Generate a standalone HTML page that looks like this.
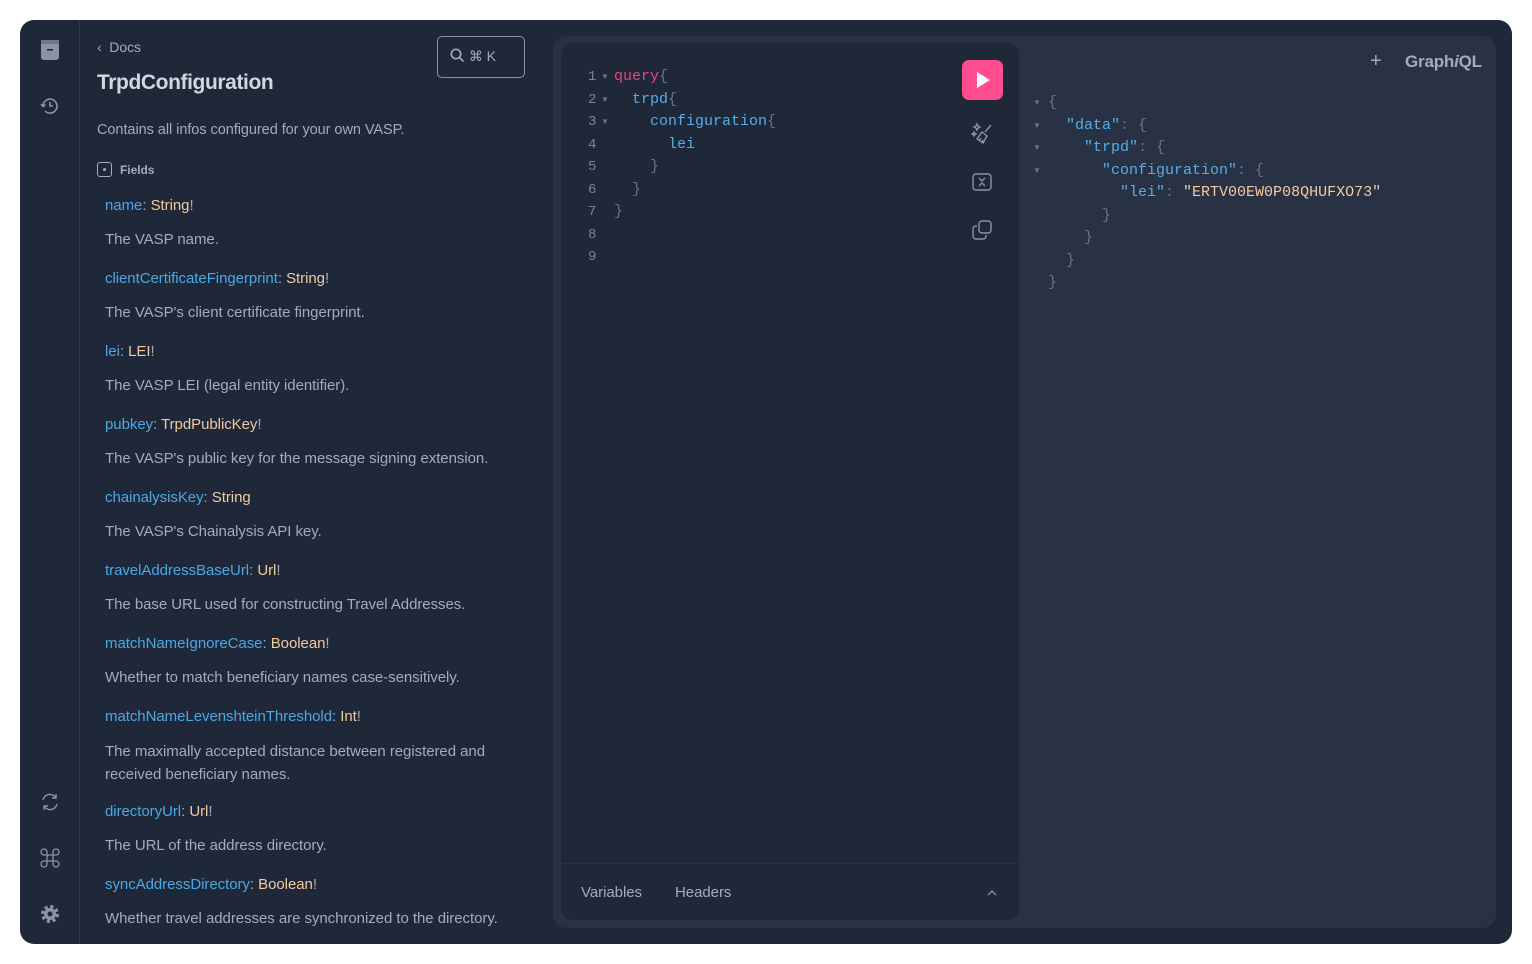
<!DOCTYPE html>
<html><head><meta charset="utf-8"><style>
*{margin:0;padding:0;box-sizing:border-box}
body{width:1532px;height:964px;background:#fff;font-family:"Liberation Sans",sans-serif;position:relative;overflow:hidden}
.app{position:absolute;left:20px;top:20px;width:1492px;height:924px;background:#1f2839;border-radius:14px;overflow:hidden}
.side{position:absolute;left:0;top:0;width:60px;height:924px;border-right:1px solid #2e384b}
.ico{position:absolute;left:19px;width:22px;height:22px}
.docs{position:absolute;left:77px;top:0;width:450px;color:#9aa3b3}
.a{position:absolute;font-size:15px;white-space:nowrap;letter-spacing:-0.05px}
.f{color:#4aa8e6}.t{color:#f3c9a0}
.d{color:#a4acb9}
.sess{position:absolute;left:533px;top:16px;width:943px;height:892px;background:#283244;border-radius:14px}
.ed{position:absolute;left:8px;top:7px;width:458px;height:877px;background:#1f2839;border-radius:12px}
.mono{font-family:"Liberation Mono","DejaVu Sans Mono",monospace;font-size:15px;position:absolute;white-space:pre;line-height:22.5px}
.ln{color:#7b8496}.g{color:#6b7486}.k{color:#e0487f}.b{color:#55aee8}.s{color:#f3c9a0}
.ar{position:absolute;color:#6b7486;font-size:8px;line-height:22.5px;white-space:pre}
</style></head><body>
<div class="app">
 <div class="side">
  <svg class="ico" style="top:19px" viewBox="0 0 22 22"><rect x="2" y="1" width="18" height="20" rx="3" fill="#8b93a3"/><rect x="2" y="1" width="18" height="4" fill="#6f7788"/><rect x="8" y="10" width="6" height="1.6" fill="#1f2839"/></svg>
  <svg class="ico" style="top:75px" viewBox="0 0 22 22" fill="none" stroke="#8b93a3" stroke-width="1.6"><path d="M4 11a7 7 0 1 1 2 5"/><path d="M2 9l2 2.5 2.5-2"/><path d="M11 7v4h3"/></svg>
  <svg class="ico" style="top:771px" viewBox="0 0 22 22" fill="none" stroke="#8b93a3" stroke-width="1.4"><path d="M4 9a7 7 0 0 1 13-2M18 13a7 7 0 0 1-13 2"/><path d="M17 3v4h-4M5 19v-4h4"/></svg>
  <svg class="ico" style="top:827px" viewBox="0 0 22 22" fill="none" stroke="#8b93a3" stroke-width="1.3"><path d="M8 8V5a3 3 0 1 0-3 3h12a3 3 0 1 0-3-3v12a3 3 0 1 0 3-3H5a3 3 0 1 0 3 3z"/></svg>
  <svg class="ico" style="top:883px" viewBox="0 0 22 22"><circle cx="11" cy="11" r="7" fill="none" stroke="#8b93a3" stroke-width="4" stroke-dasharray="3 2.5"/><circle cx="11" cy="11" r="6" fill="#8b93a3"/><circle cx="11" cy="11" r="2.5" fill="#1f2839"/></svg>
 </div>
 <div class="docs">
  <div class="a" style="left:0;top:19px;font-size:14px;color:#a4acb9">‹&nbsp;&nbsp;Docs</div>
  <div class="a" style="left:0;top:51px;font-size:21px;font-weight:bold;color:#d3d8e0;letter-spacing:-0.4px">TrpdConfiguration</div>
  <div class="a" style="left:340px;top:16px;width:88px;height:42px;border:1.5px solid #8b93a3;border-radius:5px;font-size:14px;color:#a4acb9;padding:11px 0 0 12px">
   <svg width="15" height="15" viewBox="0 0 15 15" style="vertical-align:-2px" fill="none" stroke="#a4acb9" stroke-width="1.6"><circle cx="6" cy="6" r="4.7"/><path d="M9.5 9.5l4 4"/></svg> ⌘ K</div>
  <div class="a d" style="left:0;top:102px;font-size:14.5px">Contains all infos configured for your own VASP.</div>
  <div class="a" style="left:0;top:142px;font-size:12px;font-weight:bold;color:#a4acb9"><span style="display:inline-block;width:15px;height:15px;border:1.5px solid #a4acb9;border-radius:3px;vertical-align:-3px;margin-right:8px;position:relative"><span style="position:absolute;left:4.5px;top:4.5px;width:3px;height:3px;background:#a4acb9;border-radius:50%"></span></span>Fields</div>
 </div>
 <div style="position:absolute;left:85px;top:0;width:440px;color:#a4acb9">
  <div class="a" style="top:177px"><span class="f">name</span>: <span class="t">String</span>!</div>
  <div class="a d" style="top:211px">The VASP name.</div>
  <div class="a" style="top:250px"><span class="f">clientCertificateFingerprint</span>: <span class="t">String</span>!</div>
  <div class="a d" style="top:284px">The VASP's client certificate fingerprint.</div>
  <div class="a" style="top:323px"><span class="f">lei</span>: <span class="t">LEI</span>!</div>
  <div class="a d" style="top:357px">The VASP LEI (legal entity identifier).</div>
  <div class="a" style="top:396px"><span class="f">pubkey</span>: <span class="t">TrpdPublicKey</span>!</div>
  <div class="a d" style="top:430px">The VASP's public key for the message signing extension.</div>
  <div class="a" style="top:469px"><span class="f">chainalysisKey</span>: <span class="t">String</span></div>
  <div class="a d" style="top:503px">The VASP's Chainalysis API key.</div>
  <div class="a" style="top:542px"><span class="f">travelAddressBaseUrl</span>: <span class="t">Url</span>!</div>
  <div class="a d" style="top:576px">The base URL used for constructing Travel Addresses.</div>
  <div class="a" style="top:615px"><span class="f">matchNameIgnoreCase</span>: <span class="t">Boolean</span>!</div>
  <div class="a d" style="top:649px">Whether to match beneficiary names case-sensitively.</div>
  <div class="a" style="top:688px"><span class="f">matchNameLevenshteinThreshold</span>: <span class="t">Int</span>!</div>
  <div class="a d" style="top:720px;line-height:23px">The maximally accepted distance between registered and<br>received beneficiary names.</div>
  <div class="a" style="top:783px"><span class="f">directoryUrl</span>: <span class="t">Url</span>!</div>
  <div class="a d" style="top:817px">The URL of the address directory.</div>
  <div class="a" style="top:856px"><span class="f">syncAddressDirectory</span>: <span class="t">Boolean</span>!</div>
  <div class="a d" style="top:890px">Whether travel addresses are synchronized to the directory.</div>
 </div>
 <div class="sess">
  <div class="ed">
   <div class="mono ln" style="left:27px;top:23px;font-size:14px">1
2
3
4
5
6
7
8
9</div>
   <div class="ar" style="left:40px;top:23px">▼
▼
▼</div>
   <div class="mono" style="left:53px;top:23px"><span class="k">query</span><span class="g">{</span>
  <span class="b">trpd</span><span class="g">{</span>
    <span class="b">configuration</span><span class="g">{</span>
      <span class="b">lei</span>
    <span class="g">}</span>
  <span class="g">}</span>
<span class="g">}</span></div>
   <div style="position:absolute;left:401px;top:17px;width:41px;height:40px;background:#ff4c8f;border-radius:7px"><svg width="41" height="40" viewBox="0 0 41 40"><path d="M15 12v16l13-8z" fill="#fff"/></svg></div>
   <svg style="position:absolute;left:410px;top:79px" width="23" height="23" viewBox="0 0 23 23" fill="none" stroke="#8b93a3" stroke-width="1.4"><path d="M20 3l-6 7M11 10l5 4-4 7-6-4zM8 19l2-3M11 20l1-2"/><path d="M6 2l1 2 2 1-2 1-1 2-1-2-2-1 2-1z"/><path d="M3 10l.7 1.3L5 12l-1.3.7L3 14l-.7-1.3L1 12l1.3-.7z"/></svg>
   <svg style="position:absolute;left:410px;top:128px" width="22" height="22" viewBox="0 0 22 22" fill="none" stroke="#8b93a3" stroke-width="1.4"><rect x="2" y="3" width="18" height="16" rx="3"/><path d="M8 7l3 3 3-3M8 15l3-3 3 3"/></svg>
   <svg style="position:absolute;left:410px;top:176px" width="22" height="22" viewBox="0 0 22 22" fill="none" stroke="#8b93a3" stroke-width="1.4"><rect x="8" y="2" width="12" height="12" rx="3"/><path d="M6 7H5a3 3 0 0 0-3 3v7a3 3 0 0 0 3 3h7a3 3 0 0 0 3-3v-1"/></svg>
   <div style="position:absolute;left:0;top:820px;width:458px;border-top:1.5px solid #283244"></div>
   <div class="a" style="left:20px;top:841px;color:#a4acb9">Variables</div>
   <div class="a" style="left:114px;top:841px;color:#a4acb9">Headers</div>
   <svg style="position:absolute;left:425px;top:845px" width="12" height="10" viewBox="0 0 12 10" fill="none" stroke="#8b93a3" stroke-width="1.3"><path d="M2 7l4-4 4 4"/></svg>
  </div>
  <div class="a" style="left:817px;top:14px;font-size:20px;color:#a4acb9">+</div>
  <div class="a" style="left:852px;top:16px;font-size:17px;font-weight:bold;color:#a4acb9;letter-spacing:-0.2px">Graph<i>i</i>QL</div>
  <div class="ar" style="left:480px;top:56px">▼
▼
▼
▼</div>
  <div class="mono" style="left:495px;top:56px"><span class="g">{</span>
  <span class="b">"data"</span><span class="g">: {</span>
    <span class="b">"trpd"</span><span class="g">: {</span>
      <span class="b">"configuration"</span><span class="g">: {</span>
        <span class="b">"lei"</span><span class="g">: </span><span class="s">"ERTV00EW0P08QHUFXO73"</span>
      <span class="g">}</span>
    <span class="g">}</span>
  <span class="g">}</span>
<span class="g">}</span></div>
 </div>
</div>
</body></html>
